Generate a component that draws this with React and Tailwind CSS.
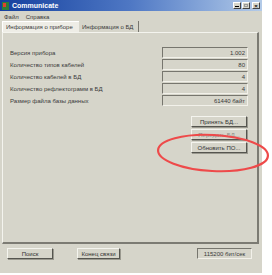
import React from "react";

const rows = [
  ["Версия прибора", "1.002"],
  ["Количество типов кабелей", "80"],
  ["Количество кабелей в БД", "4"],
  ["Количество рефлектограмм в БД", "4"],
  ["Размер файла базы данных", "61440 байт"],
];

// raised win9x style button
function Btn({ children, className = "", disabled }) {
  return (
    <div
      className={
        "h-[11px] flex items-center justify-center whitespace-nowrap border border-t-[#f4f4ee] border-l-[#f4f4ee] border-r-[#55554f] border-b-[#55554f] shadow-[1px_1px_0_#9a998f] " +
        (disabled ? "text-[#8a8a84] " : "text-[#333] ") +
        className
      }
    >
      {children}
    </div>
  );
}

function Field({ children, className = "" }) {
  return (
    <div
      className={
        "h-[11px] flex items-center justify-end pr-[2px] whitespace-nowrap border border-t-[#77766e] border-l-[#77766e] border-r-[#f2f1ea] border-b-[#f2f1ea] " +
        className
      }
    >
      {children}
    </div>
  );
}

export default function App() {
  return (
    <div className="w-[272px] h-[275px] bg-white font-['Liberation_Sans',Arial,sans-serif] text-[6px] leading-none text-[#3a3a3a] relative">
      <div className="w-[262px] h-[273px] bg-[#d6d5ca] flex flex-col">
        {/* title bar */}
        <div className="h-[11px] flex items-center bg-gradient-to-r from-[#143f9e] via-[#4f78c4] to-[#b4cbe8] pl-[2px] pr-[2px]">
          <svg width="7" height="8" viewBox="0 0 7 8">
            <rect x="0" y="0" width="7" height="8" fill="#2f7b3a" />
            <rect x="1" y="1" width="3" height="4" fill="#e04030" />
          </svg>
          <span className="ml-[3px] text-white font-bold text-[7px]">Communicate</span>
          <div className="ml-auto flex gap-[1px]">
            <div className="w-[8px] h-[7px] bg-[#d6d5ca] border border-t-white border-l-white border-r-[#444] border-b-[#444] flex items-end justify-center">
              <div className="w-[4px] h-[1px] bg-black mb-[1px]" />
            </div>
            <div className="w-[8px] h-[7px] bg-[#d6d5ca] border border-t-white border-l-white border-r-[#444] border-b-[#444] flex items-center justify-center">
              <div className="w-[4px] h-[3px] border border-[#999]" />
            </div>
            <div className="w-[8px] h-[7px] ml-[1px] bg-[#d6d5ca] border border-t-white border-l-white border-r-[#444] border-b-[#444] flex items-center justify-center text-[6px] font-bold text-black">
              ×
            </div>
          </div>
        </div>

        {/* menu */}
        <div className="h-[9px] flex items-center gap-[7px] pl-[4px] mt-[1px]">
          <span>Файл</span>
          <span>Справка</span>
        </div>

        {/* tabs */}
        <div className="h-[11px] flex items-end pl-[2px]">
          <div className="h-[11px] w-[77px] bg-[#eeede6] flex items-center pl-[3px] whitespace-nowrap border-t border-l border-white">
            Информация о приборе
          </div>
          <div className="h-[11px] w-[60px] flex items-center pl-[3px] whitespace-nowrap border-r border-[#77766e]">
            Информация о БД
          </div>
        </div>

        {/* panel */}
        <div className="ml-[2px] w-[257px] h-[212px] border-t border-l border-t-[#f4f4ee] border-l-[#f4f4ee] border-r-2 border-b-2 border-r-[#7c7b73] border-b-[#7c7b73] flex flex-col pt-[14px]">
          <div className="flex">
            <div className="w-[159px] flex flex-col pl-[7px]">
              {rows.map(([label]) => (
                <div key={label} className="h-[12px] flex items-center whitespace-nowrap">
                  {label}
                </div>
              ))}
            </div>
            <div className="w-[86px] flex flex-col gap-[1px]">
              {rows.map(([label, value]) => (
                <Field key={label}>{value}</Field>
              ))}
            </div>
          </div>
          <div className="flex flex-col gap-[1px] ml-[188px] mt-[9px] w-[56px]">
            <Btn>Принять БД...</Btn>
            <Btn disabled className="mt-[1px]">Передать БД...</Btn>
            <Btn className="mt-[1px]">Обновить ПО...</Btn>
          </div>
        </div>

        {/* bottom row */}
        <div className="flex items-center mt-[4px] h-[11px]">
          <Btn className="ml-[7px] w-[46px]">Поиск</Btn>
          <Btn className="ml-[24px] w-[43px]">Конец связи</Btn>
          <Field className="ml-auto mr-[10px] w-[55px] !justify-center !pr-0">115200 бит/сек</Field>
        </div>
      </div>

      {/* red hand-drawn ellipse */}
      <svg
        className="absolute left-[155px] top-[131px]"
        width="117"
        height="44"
        viewBox="0 0 117 44"
      >
        <ellipse
          cx="58"
          cy="22"
          rx="55"
          ry="18"
          fill="none"
          stroke="#ee4a4a"
          strokeWidth="2.2"
          transform="rotate(3 58 22)"
        />
      </svg>
    </div>
  );
}
